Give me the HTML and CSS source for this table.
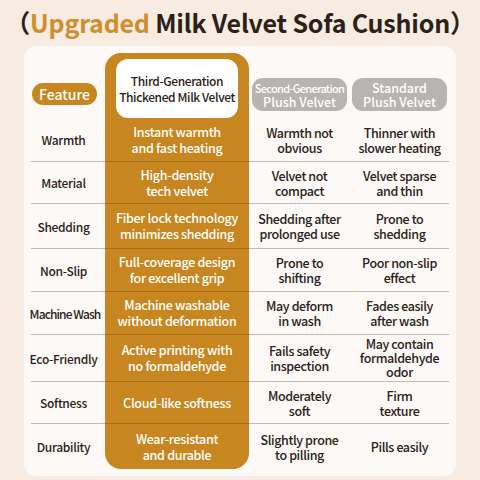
FILE: index.html
```html
<!DOCTYPE html>
<html lang="en">
  <head>
    <meta charset="utf-8">
    <title>Milk Velvet Sofa Cushion</title>
    <link rel="stylesheet" href="styles.css">
  </head>
  <body>
    <h1 class="title">（<span class="accent">Upgraded</span> Milk Velvet Sofa Cushion）</h1>

    <div class="card">
      <div class="table">
        <!-- header -->
        <div class="head label-head"><span class="pill pill-gold">Feature</span></div>
        <div class="head best-head"><div class="best-box">Third-Generation<br>Thickened Milk Velvet</div></div>
        <div class="head"><span class="pill pill-grey"><span class="small">Second-Generation</span>Plush Velvet</span></div>
        <div class="head"><span class="pill pill-grey">Standard<br>Plush Velvet</span></div>

        <div class="cell label first">Warmth</div>
        <div class="cell best first">Instant warmth<br>and fast heating</div>
        <div class="cell first">Warmth not<br>obvious</div>
        <div class="cell first">Thinner with<br>slower heating</div>

        <div class="cell label">Material</div>
        <div class="cell best">High-density<br>tech velvet</div>
        <div class="cell">Velvet not<br>compact</div>
        <div class="cell">Velvet sparse<br>and thin</div>

        <div class="cell label">Shedding</div>
        <div class="cell best">Fiber lock technology<br>minimizes shedding</div>
        <div class="cell">Shedding after<br>prolonged use</div>
        <div class="cell">Prone to<br>shedding</div>

        <div class="cell label">Non-Slip</div>
        <div class="cell best">Full-coverage design<br>for excellent grip</div>
        <div class="cell">Prone to<br>shifting</div>
        <div class="cell">Poor non-slip<br>effect</div>

        <div class="cell label narrow">Machine Wash</div>
        <div class="cell best">Machine washable<br>without deformation</div>
        <div class="cell">May deform<br>in wash</div>
        <div class="cell">Fades easily<br>after wash</div>

        <div class="cell label">Eco-Friendly</div>
        <div class="cell best">Active printing with<br>no formaldehyde</div>
        <div class="cell">Fails safety<br>inspection</div>
        <div class="cell tight">May contain<br>formaldehyde<br>odor</div>

        <div class="cell label">Softness</div>
        <div class="cell best">Cloud-like softness</div>
        <div class="cell">Moderately<br>soft</div>
        <div class="cell">Firm<br>texture</div>

        <div class="cell label">Durability</div>
        <div class="cell best last">Wear-resistant<br>and durable</div>
        <div class="cell">Slightly prone<br>to pilling</div>
        <div class="cell">Pills easily</div>
      </div>
    </div>
  </body>
</html>
```

FILE: styles.css
```css
body {
  margin: 0;
  width: 480px;
  height: 480px;
  background: #f8ece2;
  font-family: "Noto Sans CJK SC", "Noto Sans", sans-serif;
  color: #2b2118;
  overflow: hidden;
}

.title {
  margin: 0;
  padding-top: 5px;
  height: 46px;
  box-sizing: border-box;
  text-align: center;
  font-size: 25px;
  font-weight: 700;
  line-height: 34px;
  letter-spacing: -0.2px;
  color: #2b2118;
}

.accent {
  color: #d08d2b;
}

.card {
  margin: 0 24px;
  padding: 7px 7px;
  background: #fdf9f6;
  border-radius: 12px;
}

.table {
  display: grid;
  grid-template-columns: 74px 144px 101px 99px;
  grid-template-rows: 65px 43px 42px 45px 43px 43px 47px 42px 46px;
}

.head {
  display: flex;
  align-items: flex-end;
  justify-content: center;
  padding-bottom: 7px;
}

.label-head {
  padding-bottom: 13px;
  justify-content: flex-start;
  padding-left: 1px;
}

.best-head {
  padding: 6px 11px 0;
  align-items: stretch;
  background: #c7861f;
  border-radius: 16px 16px 0 0;
}

.best-box {
  flex: 1;
  background: #ffffff;
  border-radius: 12px;
  display: flex;
  align-items: center;
  justify-content: center;
  text-align: center;
  white-space: nowrap;
  font-size: 12px;
  font-weight: 500;
  line-height: 16px;
  letter-spacing: -0.4px;
  color: #2b2118;
}

.pill {
  color: #ffffff;
  text-align: center;
  font-weight: 500;
}

.pill-gold {
  background: #c7861f;
  width: 65px;
  height: 22px;
  border-radius: 11px;
  font-size: 14px;
  line-height: 22px;
}

.pill-grey {
  background: #b7b4b1;
  width: 95px;
  height: 33px;
  border-radius: 11px;
  font-size: 12.5px;
  line-height: 14px;
  display: flex;
  flex-direction: column;
  align-items: center;
  justify-content: center;
  white-space: nowrap;
}

.small {
  font-size: 11px;
  letter-spacing: -0.7px;
}

.cell {
  display: flex;
  align-items: center;
  justify-content: center;
  text-align: center;
  font-size: 12.5px;
  font-weight: 500;
  line-height: 15px;
  letter-spacing: -0.4px;
  white-space: nowrap;
  color: #2b2118;
  border-top: 1px solid #bfbbb7;
}

.cell.first {
  border-top: none;
}

.tight {
  line-height: 14px;
}

.label {
  font-size: 12px;
  letter-spacing: -0.3px;
  padding-right: 9px;
}

.narrow {
  font-size: 12px;
  letter-spacing: -0.9px;
  padding-right: 6px;
}

.best {
  background: #c7861f;
  color: #ffffff;
  font-size: 12.5px;
  line-height: 16px;
  letter-spacing: -0.3px;
  border-top-color: #a46c17;
}

.best.last {
  border-radius: 0 0 16px 16px;
}
```
